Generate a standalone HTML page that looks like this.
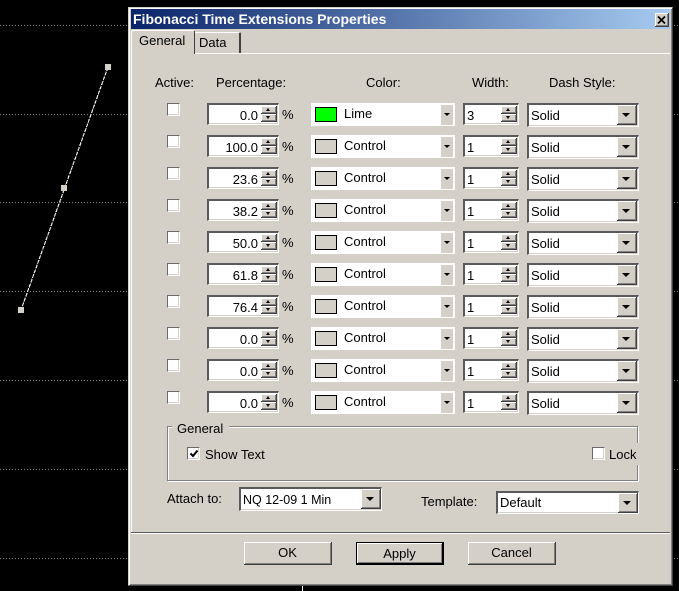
<!DOCTYPE html>
<html><head><meta charset="utf-8"><style>
html,body{margin:0;padding:0;background:#000}
#p{position:relative;width:679px;height:591px;overflow:hidden;background:#000;font:13px/16px "Liberation Sans",sans-serif;color:#000}
#p div,#p span{position:absolute;box-sizing:border-box;white-space:nowrap}
.g{height:1px;background:repeating-linear-gradient(90deg,#8a8a8a 0 1px,#000 1px 3px)}
.h{left:0;width:128px}.hr{left:674px;width:5px}
.q{width:6px;height:6px;background:#d4d0c8}
#d{left:128px;top:7px;width:545px;height:579px;background:#d4d0c8;border-top:1px solid #d4d0c8;border-left:1px solid #d4d0c8;border-right:1px solid #404040;border-bottom:1px solid #404040;box-shadow:inset 1px 1px 0 #fff,inset -1px -1px 0 #808080}
#t{left:131px;top:9px;width:539px;height:20px;background:linear-gradient(90deg,#0a246a,#a6caf0)}
.r{left:0;width:679px;height:26px}
.c{left:167px;top:0;width:13px;height:13px;background:#fff;border-top:1px solid #6a6a6a;border-left:1px solid #6a6a6a;border-right:1px solid #fff;border-bottom:1px solid #fff;box-shadow:inset -1px -1px 0 #d4d0c8}
.in{background:#fff;border-top:2px solid #5a5a5a;border-left:2px solid #5a5a5a;border-right:1px solid #fff;border-bottom:1px solid #fff;box-shadow:inset -1px -1px 0 #d4d0c8}
.sp{top:0;height:22px}
.sb{width:16px;height:8px;background:#d4d0c8;border-right:1px solid #404040;border-bottom:1px solid #404040;box-shadow:inset 1px 1px 0 #fff,inset -1px -1px 0 #808080}
.u:after,.e:after{content:"";position:absolute;left:5px;top:2px;border:2.5px solid transparent;border-top:0;border-bottom:3px solid #000}
.e:after{border-bottom:0;border-top:3px solid #000}
.pv{right:20px;top:3px}.pc{left:282px;top:4px}.wv{left:2px;top:3px}.so{left:2px;top:3px}.cn{left:33px;top:3px}
.col{left:311px;top:0;width:144px;height:23px;background:#fff}
.sw{left:4px;top:4px;width:22px;height:15px;border:1px solid #000;background:#d4d0c8}
.ar{left:130px;top:2px;width:12px;height:20px;background:#d4d0c8}
.ar:after{content:"";position:absolute;left:3px;top:8px;border:3px solid transparent;border-bottom:0;border-top:3px solid #000}
.dd{width:20px;height:20px;background:#d4d0c8;border-right:1px solid #404040;border-bottom:1px solid #404040;box-shadow:inset 1px 1px 0 #fff,inset -1px -1px 0 #808080}
.dd:after{content:"";position:absolute;left:5px;top:8px;border:4.5px solid transparent;border-bottom:0;border-top:4px solid #000}
.ds{left:527px;top:0;width:112px;height:24px}
.ps{left:207px;width:72px}.ws{left:463px;width:56px}
.s1{left:52px;top:1px}.s2{left:52px;top:9px}.s3{left:36px;top:1px}.s4{left:36px;top:9px}
.b{top:542px;width:88px;height:23px;background:#d4d0c8;text-align:center;line-height:22px;border-right:1px solid #404040;border-bottom:1px solid #404040;box-shadow:inset 1px 1px 0 #fff,inset -1px -1px 0 #808080}
.l{line-height:16px}
</style></head><body><div id="p">
<div class="g h" style="top:25px"></div><div class="g h" style="top:114px"></div><div class="g h" style="top:202px"></div><div class="g h" style="top:291px"></div><div class="g h" style="top:380px"></div><div class="g h" style="top:469px"></div><div class="g h" style="top:558px"></div>
<div class="g hr" style="top:25px"></div><div class="g hr" style="top:114px"></div><div class="g hr" style="top:202px"></div><div class="g hr" style="top:291px"></div><div class="g hr" style="top:380px"></div><div class="g hr" style="top:469px"></div><div class="g hr" style="top:558px"></div>
<svg style="position:absolute;left:0;top:0" width="128" height="330" shape-rendering="crispEdges"><path d="M108 67L21 310" stroke="#e8e8e0" stroke-width="1.2" stroke-dasharray="4 1" fill="none"/></svg>
<div class="q" style="left:105px;top:64px"></div><div class="q" style="left:61px;top:185px"></div><div class="q" style="left:18px;top:307px"></div>
<div style="left:302px;top:585px;width:1px;height:6px;background:#fff"></div>
<div id="d"></div>
<div id="t"></div>
<div style="left:133px;top:10px;color:#fff;font:bold 14px/18px 'Liberation Sans',sans-serif">Fibonacci Time Extensions Properties</div>
<div style="left:655px;top:13px;width:14px;height:14px;background:#d4d0c8;border-right:1px solid #404040;border-bottom:1px solid #404040;box-shadow:inset 1px 1px 0 #fff,inset -1px -1px 0 #808080"><svg style="position:absolute;left:2px;top:2px" width="10" height="10"><path d="M1 1.5L8 8.5M8 1.5L1 8.5" stroke="#000" stroke-width="1.8"/></svg></div>
<div style="left:131px;top:53px;width:1px;height:479px;background:#fff"></div>
<div style="left:194px;top:53px;width:476px;height:1px;background:#fff"></div>
<div style="left:131px;top:532px;width:539px;height:1px;background:#5a5a5a"></div>
<div style="left:131px;top:533px;width:539px;height:1px;background:#fff"></div>
<div style="left:131px;top:30px;width:64px;height:24px;background:#d4d0c8;border-left:1px solid #fff;border-top:1px solid #fff;border-right:1px solid #404040;border-radius:2px 2px 0 0"></div>
<div style="left:195px;top:32px;width:46px;height:21px;background:#d4d0c8;border-top:1px solid #fff;border-right:2px solid #404040;border-radius:0 2px 0 0"></div>
<div class="l" style="left:139px;top:33px">General</div>
<div class="l" style="left:199px;top:35px">Data</div>
<div class="l" style="left:155px;top:75px">Active:</div>
<div class="l" style="left:216px;top:75px">Percentage:</div>
<div class="l" style="left:366px;top:75px">Color:</div>
<div class="l" style="left:472px;top:75px">Width:</div>
<div class="l" style="left:549px;top:75px">Dash Style:</div>

<div class="r" style="top:103px"><div class="c"></div><div class="in sp ps"><span class="pv">0.0</span><div class="sb u s1"></div><div class="sb e s2"></div></div><span class="pc">%</span><div class="col"><div class="sw" style="background:#0f0"></div><span class="cn">Lime</span><div class="ar"></div></div><div class="in sp ws"><span class="wv">3</span><div class="sb u s3"></div><div class="sb e s4"></div></div><div class="in ds"><span class="so">Solid</span><div class="dd" style="left:88px;top:0"></div></div></div>

<div class="r" style="top:135px"><div class="c"></div><div class="in sp ps"><span class="pv">100.0</span><div class="sb u s1"></div><div class="sb e s2"></div></div><span class="pc">%</span><div class="col"><div class="sw"></div><span class="cn">Control</span><div class="ar"></div></div><div class="in sp ws"><span class="wv">1</span><div class="sb u s3"></div><div class="sb e s4"></div></div><div class="in ds"><span class="so">Solid</span><div class="dd" style="left:88px;top:0"></div></div></div>

<div class="r" style="top:167px"><div class="c"></div><div class="in sp ps"><span class="pv">23.6</span><div class="sb u s1"></div><div class="sb e s2"></div></div><span class="pc">%</span><div class="col"><div class="sw"></div><span class="cn">Control</span><div class="ar"></div></div><div class="in sp ws"><span class="wv">1</span><div class="sb u s3"></div><div class="sb e s4"></div></div><div class="in ds"><span class="so">Solid</span><div class="dd" style="left:88px;top:0"></div></div></div>

<div class="r" style="top:199px"><div class="c"></div><div class="in sp ps"><span class="pv">38.2</span><div class="sb u s1"></div><div class="sb e s2"></div></div><span class="pc">%</span><div class="col"><div class="sw"></div><span class="cn">Control</span><div class="ar"></div></div><div class="in sp ws"><span class="wv">1</span><div class="sb u s3"></div><div class="sb e s4"></div></div><div class="in ds"><span class="so">Solid</span><div class="dd" style="left:88px;top:0"></div></div></div>

<div class="r" style="top:231px"><div class="c"></div><div class="in sp ps"><span class="pv">50.0</span><div class="sb u s1"></div><div class="sb e s2"></div></div><span class="pc">%</span><div class="col"><div class="sw"></div><span class="cn">Control</span><div class="ar"></div></div><div class="in sp ws"><span class="wv">1</span><div class="sb u s3"></div><div class="sb e s4"></div></div><div class="in ds"><span class="so">Solid</span><div class="dd" style="left:88px;top:0"></div></div></div>

<div class="r" style="top:263px"><div class="c"></div><div class="in sp ps"><span class="pv">61.8</span><div class="sb u s1"></div><div class="sb e s2"></div></div><span class="pc">%</span><div class="col"><div class="sw"></div><span class="cn">Control</span><div class="ar"></div></div><div class="in sp ws"><span class="wv">1</span><div class="sb u s3"></div><div class="sb e s4"></div></div><div class="in ds"><span class="so">Solid</span><div class="dd" style="left:88px;top:0"></div></div></div>

<div class="r" style="top:295px"><div class="c"></div><div class="in sp ps"><span class="pv">76.4</span><div class="sb u s1"></div><div class="sb e s2"></div></div><span class="pc">%</span><div class="col"><div class="sw"></div><span class="cn">Control</span><div class="ar"></div></div><div class="in sp ws"><span class="wv">1</span><div class="sb u s3"></div><div class="sb e s4"></div></div><div class="in ds"><span class="so">Solid</span><div class="dd" style="left:88px;top:0"></div></div></div>

<div class="r" style="top:327px"><div class="c"></div><div class="in sp ps"><span class="pv">0.0</span><div class="sb u s1"></div><div class="sb e s2"></div></div><span class="pc">%</span><div class="col"><div class="sw"></div><span class="cn">Control</span><div class="ar"></div></div><div class="in sp ws"><span class="wv">1</span><div class="sb u s3"></div><div class="sb e s4"></div></div><div class="in ds"><span class="so">Solid</span><div class="dd" style="left:88px;top:0"></div></div></div>

<div class="r" style="top:359px"><div class="c"></div><div class="in sp ps"><span class="pv">0.0</span><div class="sb u s1"></div><div class="sb e s2"></div></div><span class="pc">%</span><div class="col"><div class="sw"></div><span class="cn">Control</span><div class="ar"></div></div><div class="in sp ws"><span class="wv">1</span><div class="sb u s3"></div><div class="sb e s4"></div></div><div class="in ds"><span class="so">Solid</span><div class="dd" style="left:88px;top:0"></div></div></div>

<div class="r" style="top:391px"><div class="c"></div><div class="in sp ps"><span class="pv">0.0</span><div class="sb u s1"></div><div class="sb e s2"></div></div><span class="pc">%</span><div class="col"><div class="sw"></div><span class="cn">Control</span><div class="ar"></div></div><div class="in sp ws"><span class="wv">1</span><div class="sb u s3"></div><div class="sb e s4"></div></div><div class="in ds"><span class="so">Solid</span><div class="dd" style="left:88px;top:0"></div></div></div>

<div style="left:167px;top:426px;width:471px;height:55px;border:1px solid #808080;box-shadow:1px 1px 0 #fff,inset 1px 1px 0 #fff"></div>
<div style="left:172px;top:424px;width:57px;height:8px;background:#d4d0c8"></div>
<div class="l" style="left:177px;top:421px">General</div>
<div class="c" style="left:187px;top:447px"></div>
<svg style="position:absolute;left:189px;top:449px" width="10" height="10"><path d="M1.5 4.5L4 7L8.5 1.5" stroke="#000" stroke-width="2" fill="none"/></svg>
<div class="l" style="left:205px;top:447px">Show Text</div>
<div style="left:636px;top:443px;width:5px;height:22px;background:#d4d0c8"></div>
<div class="c" style="left:592px;top:447px"></div>
<div class="l" style="left:609px;top:447px">Lock</div>

<div class="l" style="left:167px;top:491px">Attach to:</div>
<div class="in" style="left:239px;top:487px;width:143px;height:24px"><span style="left:2px;top:3px;font-size:12.5px">NQ 12-09 1 Min</span><div class="dd" style="left:120px;top:0"></div></div>
<div class="l" style="left:421px;top:494px">Template:</div>
<div class="in" style="left:496px;top:491px;width:143px;height:23px"><span style="left:2px;top:2px">Default</span><div class="dd" style="left:120px;top:0"></div></div>

<div class="b" style="left:244px">OK</div>
<div class="b" style="left:356px;border:1px solid #000;border-right:2px solid #000;border-bottom:2px solid #000">Apply</div>
<div class="b" style="left:468px">Cancel</div>
</div></body></html>
